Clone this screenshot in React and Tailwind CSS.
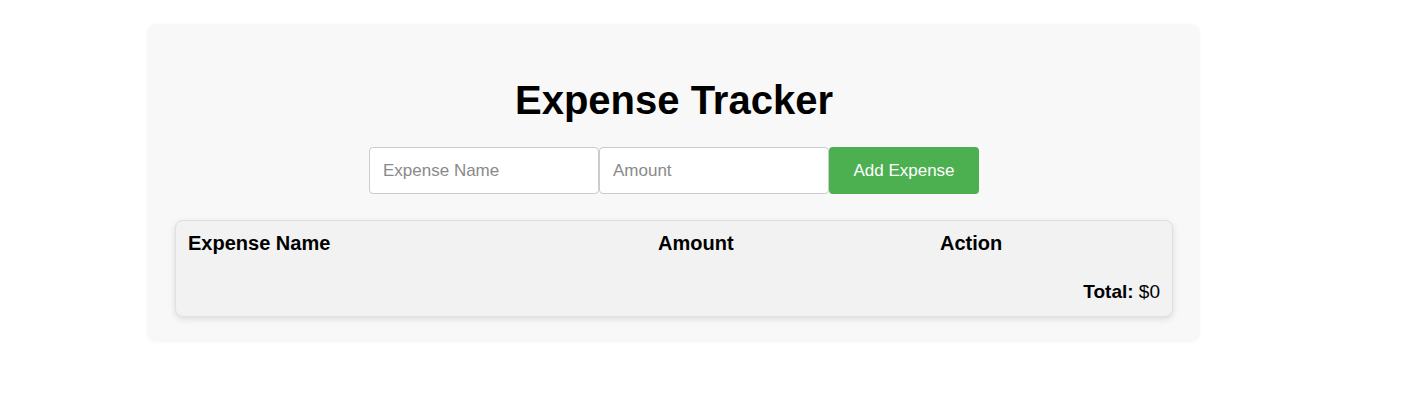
import { useState } from 'react';

export default function App() {
  const [name, setName] = useState('');
  const [amount, setAmount] = useState('');
  const [expenses, setExpenses] = useState([]);

  function addExpense() {
    if (!name || !amount) return;
    setExpenses([...expenses, { name, amount: Number(amount) }]);
    setName('');
    setAmount('');
  }

  const total = expenses.reduce((s, e) => s + e.amount, 0);

  return (
    <div className="w-[1410px] h-[408px] bg-white font-['Liberation_Sans',Arial,sans-serif] text-black pt-[24px]">
      {/* Carte principale */}
      <div className="ml-[148px] w-[1051px] bg-[#f8f8f8] rounded-lg shadow-[0_1px_4px_rgba(0,0,0,0.06)] pt-[53px] pb-[23px] pl-[27px] pr-[26px]">
        <h1 className="text-center text-[40px] leading-[46px] font-bold">Expense Tracker</h1>

        <div className="mt-[24px] flex justify-center">
          <input
            value={name}
            onChange={(e) => setName(e.target.value)}
            placeholder="Expense Name"
            className="w-[230px] h-[47px] px-[13px] bg-white border border-[#cccccc] rounded text-[17px] placeholder:text-[#8a8a8a] outline-none"
          />
          <input
            value={amount}
            onChange={(e) => setAmount(e.target.value)}
            placeholder="Amount"
            className="w-[230px] h-[47px] px-[13px] bg-white border border-[#cccccc] rounded text-[17px] placeholder:text-[#8a8a8a] outline-none"
          />
          <button
            onClick={addExpense}
            className="w-[150px] h-[47px] bg-[#4caf50] text-white text-[17px] rounded"
          >
            Add Expense
          </button>
        </div>

        {/* Tableau */}
        <div className="mt-[26px] bg-[#f2f2f2] border border-[#e0e0e0] rounded-lg shadow-[0_2px_6px_rgba(0,0,0,0.12)] pt-[11px] pb-[13px] pl-[12px] pr-[12px]">
          <div className="grid grid-cols-[470px_282px_1fr] text-[20px] leading-[23px] font-bold">
            <div>Expense Name</div>
            <div>Amount</div>
            <div>Action</div>
          </div>
          {expenses.map((e, i) => (
            <div key={i} className="grid grid-cols-[470px_282px_1fr] text-[16px] py-1">
              <div>{e.name}</div>
              <div>${e.amount}</div>
              <div />
            </div>
          ))}
          <div className="mt-[26px] text-right text-[19px] leading-[22px]">
            <span className="font-bold">Total:</span> ${total}
          </div>
        </div>
      </div>
    </div>
  );
}
